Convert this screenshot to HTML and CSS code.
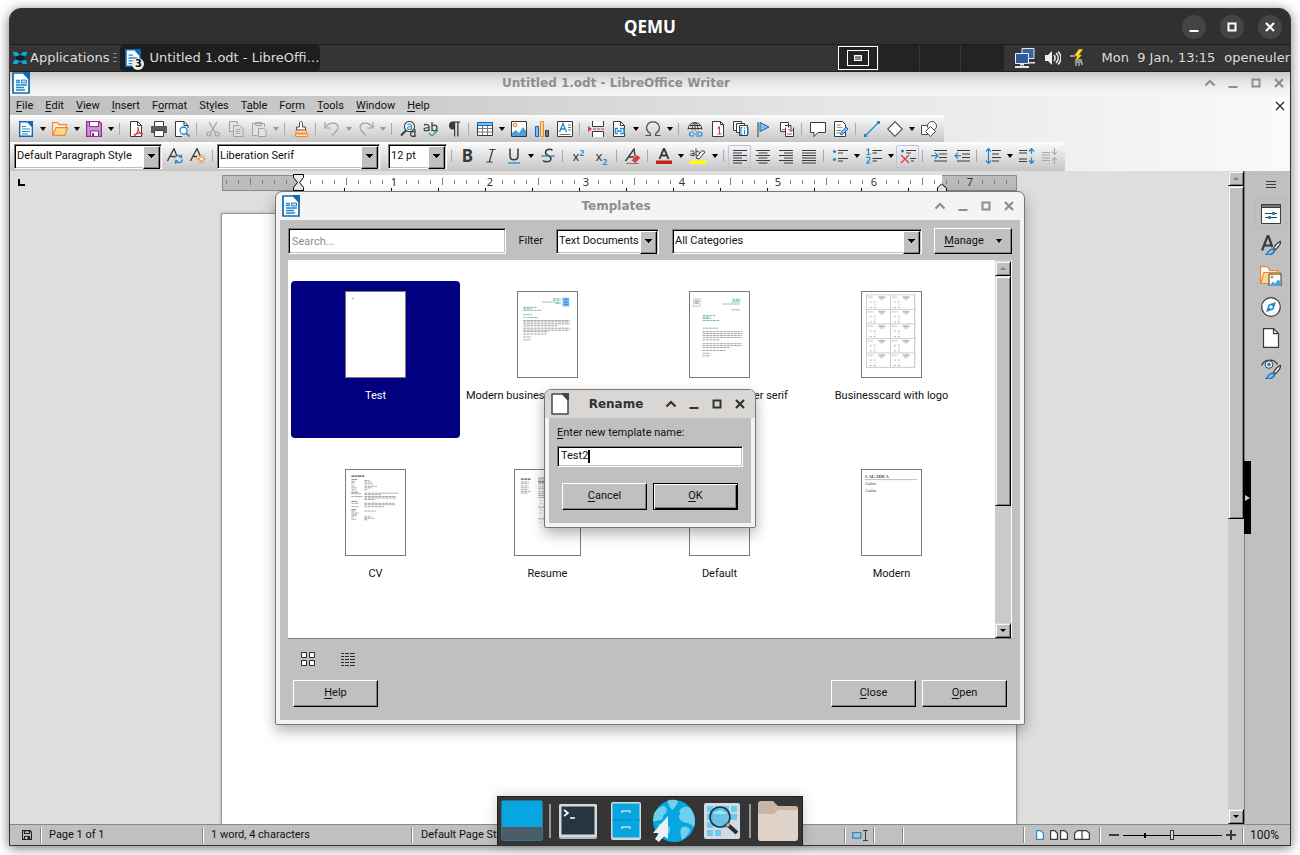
FILE: index.html
```
<!DOCTYPE html>
<html lang="en">
<head>
<meta charset="utf-8">
<title>QEMU</title>
<link rel="stylesheet" href="styles.css">
</head>
<body>
<svg class="sprite" aria-hidden="true">
  <symbol id="writer" viewBox="0 0 18 22"><path d="M1 1h10.500l5.500 6v14H1z" fill="#fdfeff" stroke="#0f69b5" stroke-width="1.700" stroke-linejoin="round"/><path d="M10.500 0H18v8z" fill="#0f69b5"/><path d="M4 8.500h4M4 10.500h4M4 13h11M4 15.500h8M4 18h9" stroke="#2487c8" stroke-width="1.300"/><path d="M9.500 8h5v3h-5z" fill="#c8dff0" stroke="#2487c8"/></symbol>
  <symbol id="blank" viewBox="0 0 18 22"><path d="M1 1h10.500l5.500 6v14H1z" fill="#fff" stroke="#464646" stroke-width="1.500" stroke-linejoin="round"/><path d="M10.500 0H18v8z" fill="#464646"/></symbol>
  <symbol id="w-up" viewBox="0 0 12 12"><path d="M1.500 8.500 6 4l4.500 4.500" fill="none" stroke="currentColor" stroke-width="2.200"/></symbol>
  <symbol id="w-min" viewBox="0 0 12 12"><path d="M1.500 10h9" stroke="currentColor" stroke-width="2"/></symbol>
  <symbol id="w-max" viewBox="0 0 12 12"><path d="M2.500 2.500h7v7h-7z" fill="none" stroke="currentColor" stroke-width="2"/></symbol>
  <symbol id="w-close" viewBox="0 0 12 12"><path d="m2 2 8 8M10 2l-8 8" fill="none" stroke="currentColor" stroke-width="2.200"/></symbol>
  <symbol id="new" viewBox="0 0 16 16"><path d="M1.700.7h8l4.600 5v9.600H1.700z" fill="#fff" stroke="#0f69b5" stroke-width="1.400"/><path d="M9.500 0H15v6z" fill="#0f69b5"/><path d="M4 5.500h4M4 8h8M4 10.500h8M4 13h6" stroke="#1e8bcd" stroke-width="1.200"/></symbol>
  <symbol id="open" viewBox="0 0 16 16"><path d="M.6 13.500V1.600h5l1.400 2h7.400v3" fill="#fdf5e6" stroke="#ed8733" stroke-width="1.200"/><path d="M.8 14.400 4 6.600h11.400l-2.600 7.800z" fill="#f8db8f" stroke="#ed8733" stroke-width="1.200"/></symbol>
  <symbol id="save" viewBox="0 0 16 16"><path d="M.6.600h12.800l2 2v12.800H.6z" fill="#c995d5" stroke="#92278f" stroke-width="1.200"/><path d="M3.500.600h9v5h-9zM4.500 10h8v5.400h-8z" fill="#fff" stroke="#92278f"/><path d="M6 12h2v3.400H6z" fill="#92278f"/></symbol>
  <symbol id="pdf" viewBox="0 0 16 16"><path d="M2.500.500h7l4 4v11h-11z" fill="#fff" stroke="#3a3a38"/><path d="M9.500.500v4h4" fill="none" stroke="#3a3a38"/><path d="M6 15c3-2 4.500-6 4-9M10 6c0 4 2 7 5 7M6 14c3-2 6-2.500 9-1" fill="none" stroke="#e33a3f" stroke-width="1.300"/></symbol>
  <symbol id="print" viewBox="0 0 16 16"><path d="M3.500 5V.500h9V5" fill="#fff" stroke="#3a3a38"/><path d="M0 5h16v7h-3V9H3v3H0z" fill="#5a5a58"/><path d="M3.500 9.500h9v6h-9z" fill="#fff" stroke="#3a3a38"/></symbol>
  <symbol id="preview" viewBox="0 0 16 16"><path d="M14 7V4.500l-4-4H1.500v15H8" fill="#fff" stroke="#3a3a38"/><path d="M10 .5v4h4" fill="none" stroke="#3a3a38"/><circle cx="9.500" cy="9.500" r="3.500" fill="#fff" stroke="#1e8bcd" stroke-width="1.300"/><path d="m12 12 3.500 3.500" stroke="#1e8bcd" stroke-width="1.600"/></symbol>
  <symbol id="cut" viewBox="0 0 16 16"><g fill="none" stroke="#a2a2a0" stroke-width="1.200"><path d="m4 1 6.500 11M12 1 5.500 12"/><circle cx="4" cy="13" r="2"/><circle cx="12" cy="13" r="2"/></g></symbol>
  <symbol id="copy" viewBox="0 0 16 16"><g fill="#e2e2e2" stroke="#a2a2a0"><path d="M5 10.500H1.500v-10h8V3"/><path d="M5.500 4.500h6l3.500 3v8H5.500zM7.500 8.500h5M7.500 10.500h5M7.500 12.500h5"/></g></symbol>
  <symbol id="paste" viewBox="0 0 16 16"><g fill="#e2e2e2" stroke="#a2a2a0"><path d="M6 14.500H1.500v-12h12V6M4.500 4.500v-3h6v3z"/><path d="M7.500 7.500h5l2.500 2v6H7.500z"/></g></symbol>
  <symbol id="brush" viewBox="0 0 16 16"><path d="M6.500 6V2c0-2 3-2 3 0v4h3v3h-9V6z" fill="#fff" stroke="#4a4a48"/><path d="M3 9.500h10.500V12H3zM2.500 13h12v2.500h-12z" fill="#fbe3b9" stroke="#ed8733"/></symbol>
  <symbol id="undo" viewBox="0 0 16 16"><path d="M1 1v6h6M1 7c4-7 13-6 13-.500 0 3-3 5-6 8" fill="none" stroke="#a2a2a0" stroke-width="1.200"/></symbol>
  <symbol id="redo" viewBox="0 0 16 16"><path d="M15 1v6H9M15 7C11 0 2 1 2 6.500c0 3 3 5 6 8" fill="none" stroke="#a2a2a0" stroke-width="1.200"/></symbol>
  <symbol id="find" viewBox="0 0 16 16"><circle cx="9.500" cy="5.500" r="5" fill="#fff" stroke="#3a3a38" stroke-width="1.100"/><path d="M6 9.500 1 14.500" stroke="#3a3a38" stroke-width="2"/><path d="M7.500 4c1-1.500 4-1.500 4 .5v4M11.500 5.500c-3 0-4 .5-4 1.700s3 2 4 0" fill="none" stroke="#1e8bcd" stroke-width="1.100"/><path d="M15 8v8M15 11.500c-1-1.500-4.500-1.500-4.500 1.500s3.500 3 4.500 1" fill="none" stroke="#3a3a38" stroke-width="1.200"/></symbol>
  <symbol id="spell" viewBox="0 0 16 16"><path d="M1 4.500c1-1.500 5-1.500 5 1V10M6 6.500c-3 0-5 .3-5 2s4 2 5 0M9 1v9M9 5.500c1-2 5-2 5 1.500s-4 3.500-5 1.500" fill="none" stroke="#3a3a38" stroke-width="1.200"/><path d="m6 12 3 3 6-6" fill="none" stroke="#18ab50" stroke-width="1.200"/></symbol>
  <symbol id="pilcrow" viewBox="0 0 16 16"><path d="M14 .600H7a4 4 0 0 0 0 8h1v7h1.200V1.700h2v13.900h1.300V1.700H14z" fill="#3a3a38"/></symbol>
  <symbol id="table" viewBox="0 0 16 16"><path d="M.5 1.500h15v13H.500z" fill="#fff" stroke="#3a3a38"/><path d="M.5 1.500h15v3H.500z" fill="#83beec" stroke="#0f69b5"/><path d="M5.500 5v9M10.500 5v9M1 7.500h14M1 11h14" stroke="#797774"/></symbol>
  <symbol id="image" viewBox="0 0 16 16"><path d="M.5.500h15v15H.500z" fill="#fff" stroke="#3a3a38"/><circle cx="4" cy="4" r="1.800" fill="#fbd9a8" stroke="#ed8733"/><path d="M1 15v-3l4-3 3 3 4-6 3 4v5z" fill="#4aa0de"/></symbol>
  <symbol id="chart" viewBox="0 0 16 16"><path d="M1.500 5.500h3v10h-3z" fill="#83beec" stroke="#0f69b5"/><path d="M6.500.500h3v15h-3z" fill="#f8db8f" stroke="#ed8733"/><path d="M11.500 9.500h3v6h-3z" fill="#797774" stroke="#3a3a38"/></symbol>
  <symbol id="textbox" viewBox="0 0 16 16"><path d="M.5.500h15v15H.500z" fill="#fff" stroke="#3a3a38"/><path d="m2.500 11 3.500-8.500L9.500 11M4 8h4" fill="none" stroke="#1e8bcd" stroke-width="1.300"/><path d="M11 4h3M11 6.500h3M11 9h3M2.500 13.500h11" stroke="#797774"/></symbol>
  <symbol id="pbreak" viewBox="0 0 16 16"><path d="M4.500 0v5.500h11V0M4.500 16v-5.500h11V16" fill="#fff" stroke="#3a3a38"/><path d="M5 8h11" stroke="#e33a3f" stroke-dasharray="3 1"/><path d="m0 5 4 3-4 3z" fill="#e33a3f"/></symbol>
  <symbol id="field" viewBox="0 0 16 16"><path d="M2.500 9V.500h7l4 4V15.500h-11V9" fill="#fff" stroke="#3a3a38"/><path d="M9.500.500v4h4" fill="none" stroke="#3a3a38"/><path d="M7 7.500H4.500v5H7M9 7.500h4v5H9M6 10h5" fill="none" stroke="#1e8bcd" stroke-width="1.500"/></symbol>
  <symbol id="omega" viewBox="0 0 16 16"><path d="M.5 14.500h4.800v-2C-1 8.500 1.500.800 8 .800s9 7.700 2.700 11.700v2h4.800" fill="none" stroke="#4a4a48" stroke-width="1.200"/></symbol>
  <symbol id="link" viewBox="0 0 16 16"><g fill="none" stroke="#3a3a38"><path d="M1 8.500a7 7 0 0 1 14 0M8 1.500v8M1 7.500h14M2.500 4.500h11M5 9c0-4 1-7 3-7.500 2 .5 3 3.500 3 7.500"/></g><path d="M7 11H4.500a2 2 0 0 0 0 4H7M9 11h4a2 2 0 0 1 0 4H9M6 13h6" fill="none" stroke="#1e8bcd" stroke-width="1.200"/></symbol>
  <symbol id="foot" viewBox="0 0 16 16"><path d="M2.500.500h8l3 3v12h-11z" fill="#fff" stroke="#3a3a38"/><path d="M10.500.500v3h3" fill="none" stroke="#3a3a38"/><path d="m7.500 7.500 2-1.500v7M7.500 13h4" fill="none" stroke="#e33a3f" stroke-width="1.200"/></symbol>
  <symbol id="endn" viewBox="0 0 16 16"><g fill="#fff" stroke="#3a3a38"><path d="M.5.500h8v9h-8z"/><path d="M3.500 2.500h8v9h-8z"/><path d="M6.500 4.500h8v10h-8z"/></g><path d="M9.500 6.500H8v7h1.500M13.500 6.500H15v7h-1.500M11.500 6.500v1.300M11.500 9v4.500" fill="none" stroke="#1e8bcd" stroke-width="1.200"/></symbol>
  <symbol id="bookmark" viewBox="0 0 16 16"><path d="M2 1v15" stroke="#3a3a38"/><path d="M4 1.500 13 6l-9 4.500z" fill="#83beec" stroke="#0f69b5"/></symbol>
  <symbol id="xref" viewBox="0 0 16 16"><g fill="#fff" stroke="#3a3a38"><path d="M1.500 1.500h8v9h-8z"/><path d="M6.500 6.500V15.500h8v-9"/></g><path d="M3 8.500h4M8 13h5" stroke="#e33a3f"/><path d="M6 4.500h6v5M9.500 8l2.500 2.500L14.500 8" fill="none" stroke="#3a3a38"/></symbol>
  <symbol id="comment" viewBox="0 0 16 16"><path d="M.5 1.500h15v10H8l-4 4v-4H.500z" fill="#fff" stroke="#3a3a38"/></symbol>
  <symbol id="track" viewBox="0 0 16 16"><path d="M1.500.500h8l3 3v12h-11z" fill="#fff" stroke="#3a3a38"/><path d="M3.500 4h4M3.500 9.500h5M3.500 12h4" stroke="#797774"/><path d="M3.500 6.500h6" stroke="#ed8733"/><path d="m7 13 6-7 2 2-6 6z" fill="#83beec" stroke="#0f69b5"/></symbol>
  <symbol id="line" viewBox="0 0 16 16"><path d="M1.500 14.500 14.500 1.500" stroke="#1e8bcd" stroke-width="1.200"/><path d="M0 13h3v3H0zM13 0h3v3h-3z" fill="#1e8bcd"/></symbol>
  <symbol id="diamond" viewBox="0 0 16 16"><path d="m8 .700 7.300 7.300L8 15.300.700 8z" fill="#fff" stroke="#4a4a48" stroke-width="1.100"/></symbol>
  <symbol id="shapes" viewBox="0 0 16 16"><g fill="#fff" stroke="#4a4a48"><path d="M.5 4.500h9v9h-9z"/><circle cx="11" cy="5" r="4.500"/><path d="m9.500 5.500 5 5-5 5-5-5z"/></g></symbol>
  <symbol id="sty-up" viewBox="0 0 16 16"><path d="M.5 13 7 .500l3 8M3.500 8.500H8" fill="none" stroke="#3a3a38" stroke-width="1.300"/><path d="M7.500 10a4 4 0 0 1 7-1V6.500M15.500 11.500a4 4 0 0 1-7 1.700V16M15 9.200h-3M8 13h3" fill="none" stroke="#1e8bcd" stroke-width="1.300"/></symbol>
  <symbol id="sty-new" viewBox="0 0 16 16"><path d="M.5 13 7 .500l3 7M3.500 8.500H7" fill="none" stroke="#3a3a38" stroke-width="1.300"/><circle cx="11.500" cy="11" r="2" fill="#fff" stroke="#ed8733"/><path d="M11.500 6v2.500M11.500 13.500V16M6.500 11H9M14 11h2.500M8 7.500l1.500 1.500M15 7.500 13.500 9M8 14.500 9.500 13M15 14.500 13.500 13" stroke="#ed8733"/></symbol>
  <symbol id="italic" viewBox="0 0 16 16"><path d="M6.500 1.500h6M3.500 14h6M9.800 1.500l-3.500 12.500" stroke="#3a3a38" stroke-width="1.200"/></symbol>
  <symbol id="under" viewBox="0 0 16 16"><path d="M4 .500v7.500c0 5 8 5 8 0V.500" fill="none" stroke="#3a3a38" stroke-width="1.500"/><path d="M2 15h12" stroke="#1e8bcd" stroke-width="1.300"/></symbol>
  <symbol id="strike" viewBox="0 0 16 16"><path d="M12.500 2.500c-2-2-7-1.500-7 2 0 4 6 2.500 5.500 6.500-.500 3.500-6 3.500-8 1.500" fill="none" stroke="#3a3a38" stroke-width="1.500"/><path d="M1 8h14" stroke="#1e8bcd" stroke-width="1.300"/></symbol>
  <symbol id="clear" viewBox="0 0 16 16"><path d="M.5 13 9 1l1 7M4 9h5" fill="none" stroke="#3a3a38" stroke-width="1.400"/><path d="m6.500 12.500 5-5.500 4 2.500-5 5.500z" fill="#e33a3f"/><path d="M1 15.500h13" stroke="#797774"/></symbol>
  <symbol id="fcolor" viewBox="0 0 16 16"><path d="M3.500 11 7.700.800h.6L12.500 11M5 7.500h6" fill="none" stroke="#3a3a38" stroke-width="1.900"/><path d="M0 12.500h16v3.500H0z" fill="#c9211e"/></symbol>
  <symbol id="hilite" viewBox="0 0 16 16"><path d="M.5 3.500c1-1 3.500-1 3.500 1V8M4 5.500c-2 0-3.500.200-3.500 1.300S3 8 4 7M6 .500V8M6 4c1-1.500 3.500-1 3.500 1.500S7 8.500 6 7" fill="none" stroke="#3a3a38"/><path d="m6 10 6-7.500 3 1.500-6 7z" fill="#fff" stroke="#3a3a38"/><path d="M0 12.500h16v3.500H0z" fill="#ff0"/></symbol>
  <symbol id="al" viewBox="0 0 16 16"><path d="M1 2.500h14M1 5h9M1 7.500h14M1 10h9M1 12.500h14M1 15h9" stroke="#3a3a38" stroke-width="1.200"/></symbol>
  <symbol id="ac" viewBox="0 0 16 16"><path d="M1 2.500h14M3.500 5h9M1 7.500h14M3.500 10h9M1 12.500h14M3.500 15h9" stroke="#3a3a38" stroke-width="1.200"/></symbol>
  <symbol id="ar" viewBox="0 0 16 16"><path d="M1 2.500h14M6 5h9M1 7.500h14M6 10h9M1 12.500h14M6 15h9" stroke="#3a3a38" stroke-width="1.200"/></symbol>
  <symbol id="aj" viewBox="0 0 16 16"><path d="M1 2.500h14M1 5h14M1 7.500h14M1 10h14M1 12.500h14M1 15h14" stroke="#3a3a38" stroke-width="1.200"/></symbol>
  <symbol id="bul" viewBox="0 0 16 16"><circle cx="2.500" cy="3.500" r="1.600" fill="#1e8bcd"/><circle cx="2.500" cy="11.500" r="1.600" fill="#1e8bcd"/><path d="M6 2.500h10M6 5h5M6 10.500h10M6 13h5" stroke="#3a3a38" stroke-width="1.200"/></symbol>
  <symbol id="num" viewBox="0 0 16 16"><path d="m.5 2 2-1v6M.5 6.500h4M.5 10c1-1.500 3.500-1 3.500.5S2 13 .5 15h4" fill="none" stroke="#1e8bcd" stroke-width="1.200"/><path d="M6.500 2.500H16M6.500 5H11M6.500 10.500H16M6.500 13H11" stroke="#3a3a38" stroke-width="1.200"/></symbol>
  <symbol id="nolist" viewBox="0 0 16 16"><circle cx="2.500" cy="3" r="1.600" fill="#1e8bcd"/><path d="M6 2.500h10M6 5h5M10 10.500h6M11 13h3" stroke="#3a3a38" stroke-width="1.200"/><path d="m1 7 8 8M9 7l-8 8" stroke="#e33a3f" stroke-width="1.300"/></symbol>
  <symbol id="ind" viewBox="0 0 16 16"><path d="M3 2.500h13M8 6h8M8 9.500h8M3 13h13" stroke="#3a3a38" stroke-width="1.200"/><path d="M0 7.700h6M4 4.700l3 3-3 3" fill="none" stroke="#1e8bcd" stroke-width="1.200"/></symbol>
  <symbol id="outd" viewBox="0 0 16 16"><path d="M3 2.500h13M8 6h8M8 9.500h8M3 13h13" stroke="#3a3a38" stroke-width="1.200"/><path d="M7 7.700H1M4 4.700l-3 3 3 3" fill="none" stroke="#1e8bcd" stroke-width="1.200"/></symbol>
  <symbol id="lsp" viewBox="0 0 16 16"><path d="M7 2.500h9M7 6h7M7 9.500h9M7 13h7" stroke="#3a3a38" stroke-width="1.200"/><path d="M3.500 1v14M1 3.500l2.500-3 2.500 3M1 12.500l2.500 3 2.500-3" fill="none" stroke="#1e8bcd" stroke-width="1.200"/></symbol>
  <symbol id="psi" viewBox="0 0 16 16"><path d="M0 2.500h8M0 5h8M0 11h8M0 13.500h8" stroke="#3a3a38" stroke-width="1.200"/><path d="M12.500 1v5M10 3.500l2.500-3 2.500 3M12.500 9.500V15M10 12.500l2.500 3 2.500-3" fill="none" stroke="#1e8bcd" stroke-width="1.200"/></symbol>
  <symbol id="psd" viewBox="0 0 16 16"><path d="M0 4.500h8M0 7h8M0 10h8M0 12.500h8M12.500 0v6M10 3.500l2.500 3 2.500-3M12.500 16v-6M10 12.500l2.500-3 2.500 3" fill="none" stroke="#a9a9a7" stroke-width="1.100"/></symbol>
  <symbol id="s-props" viewBox="0 0 20 20"><path d="M.5.500h19v19H.500z" fill="#fff" stroke="#3a3a38"/><path d="M.5.500h19v3H.500z" fill="#797774" stroke="#3a3a38"/><path d="M4 9.500h12M4 13.500h12" stroke="#3a3a38"/><path d="M11 8h3v3h-3zM7 12h3v3H7z" fill="#1e8bcd"/></symbol>
  <symbol id="s-brush" viewBox="0 0 20 20"><path d="M20.500 6c-3 1-6 4-8 7l2 1.800c2.500-2.300 5-5.300 6-8.800z" fill="#fff" stroke="#3a3a38" stroke-width="1.200"/><path d="M4.500 20c2-1 3-6 7-6l2 2c-1 4-6 4-9 4z" fill="#83beec" stroke="#0f69b5" stroke-width="1.200"/></symbol>
  <symbol id="s-styles" viewBox="0 0 20 20"><path d="M1 15.500 6.700.800h.6l4 11M3 10.500h7" fill="none" stroke="#3a3a38" stroke-width="2.200"/><use href="#s-brush" width="20" height="20"/></symbol>
  <symbol id="s-gal" viewBox="0 0 22 20"><path d="M.6 17V.600h7l2 4h8v3" fill="#fff" stroke="#ed8733" stroke-width="1.200"/><path d="m.8 17.500 3-11h17l-3 11z" fill="#f8db8f" stroke="#ed8733" stroke-width="1.200"/><path d="M9 8h12v12H9z" fill="#fff" stroke="#3a3a38"/><circle cx="12" cy="11" r="1.500" fill="#ed8733"/><path d="m9.500 19.500 3.500-4 2 2 3-4 2.500 2v4z" fill="#4aa0de"/></symbol>
  <symbol id="s-nav" viewBox="0 0 20 20"><circle cx="10" cy="10" r="9.300" fill="#fff" stroke="#3a3a38" stroke-width="1.200"/><path d="m15 5-2.500 7.500L5 15l2.500-7.500z" fill="#1e8bcd"/><circle cx="10" cy="10" r="1.700" fill="#fff"/></symbol>
  <symbol id="s-page" viewBox="0 0 20 20"><path d="M2.500.600h10l5 5v13.800h-15z" fill="#fff" stroke="#3a3a38" stroke-width="1.200"/><path d="M12.500.600v5h5" fill="none" stroke="#3a3a38" stroke-width="1.200"/></symbol>
  <symbol id="s-insp" viewBox="0 0 20 20"><path d="M.5 6.500c3-7 13-7 16-1" fill="none" stroke="#3a3a38" stroke-width="1.200"/><circle cx="8" cy="5.500" r="3.800" fill="#fff" stroke="#3a3a38"/><circle cx="8" cy="5.500" r="2" fill="#1e8bcd"/><use href="#s-brush" width="20" height="20"/></symbol>
  <symbol id="t-page" viewBox="0 0 8 10"><path d="M.6.600h4l2.800 2.600v6.200H.6z" fill="#fff" stroke="currentColor" stroke-width="1.200"/></symbol>
</svg>

<main class="window">
  <header class="qemu-bar">
    <h1>QEMU</h1>
    <div class="qemu-ctl">
      <button aria-label="Minimize"><svg><use href="#w-min"/></svg></button>
      <button aria-label="Maximize"><svg><use href="#w-max"/></svg></button>
      <button aria-label="Close"><svg><use href="#w-close"/></svg></button>
    </div>
  </header>

  <nav class="panel">
    <button class="apps"><svg width="14" height="14" viewBox="0 0 14 14"><path d="M0 1h4l3 3 3-3h4l-.5 3-3 2v2l3 2 .5 3h-4l-3-3-3 3H0l.5-3 3-2V6l-3-2z" fill="#11a7dc"/><path d="M3 5.500 7 4l4.500 1v4L7 10 3 8.500z" fill="#10222a"/></svg>Applications</button>
    <span class="grip"></span>
    <button class="task"><span class="task-icon"><svg width="18" height="18"><use href="#new"/></svg><b>3</b></span><span class="task-text">Untitled 1.odt - LibreOffi…</span></button>
    <span class="grow"></span>
    <div class="pager"><span class="cell active"><i></i></span><span class="cell"></span><span class="cell"></span><span class="cell"></span></div>
    <div class="tray">
      <svg width="22" height="20" viewBox="0 0 22 20"><path d="M8 .500h12v10H8z" fill="#3465a4" stroke="#e8e8e0"/><path d="M13 14h8v1.500h-8z" fill="#e8e8e0"/><path d="M1.500 5.500h13v10h-13z" fill="#2f5a9c" stroke="#eee"/><path d="M6 16h4v1.500H6zM1 18h14v2H1z" fill="#e8e8e0"/></svg>
      <svg width="16" height="16" viewBox="0 0 16 16"><path d="M0 5h3l4-4v14l-4-4H0z" fill="#eee"/><path d="M9 5c1.500 2 1.500 4 0 6M11 3c3 3 3 7 0 10M13 1.500c4 4 4 9 0 13" fill="none" stroke="#eee" stroke-width="1.500"/></svg>
      <svg width="16" height="18" viewBox="0 0 16 18"><path d="M0 6h5v2H0zM5 10h7v4H5z" fill="#999"/><path d="M9 0 4 7h3l-2 6 7-7H9l4-6z" fill="#fbd82c" stroke="#a07a10" stroke-width=".7"/><path d="M6 14v3M9 14v3M12 13v3" stroke="#ddd"/></svg>
    </div>
    <span class="clock">Mon&nbsp; 9 Jan, 13:15</span>
    <span class="user">openeuler</span>
  </nav>

  <section class="writer">
    <header class="titlebar inactive shade">
      <svg class="app"><use href="#writer"/></svg>
      <h2>Untitled 1.odt - LibreOffice Writer</h2>
      <div class="ctl"><button aria-label="Roll up"><svg><use href="#w-up"/></svg></button><button aria-label="Minimize"><svg><use href="#w-min"/></svg></button><button aria-label="Maximize"><svg><use href="#w-max"/></svg></button><button aria-label="Close"><svg><use href="#w-close"/></svg></button></div>
    </header>

    <div class="chrome">
      <nav class="menubar">
        <button><u>F</u>ile</button><button><u>E</u>dit</button><button><u>V</u>iew</button><button><u>I</u>nsert</button><button>F<u>o</u>rmat</button><button>St<u>y</u>les</button><button>T<u>a</u>ble</button><button>Fo<u>r</u>m</button><button><u>T</u>ools</button><button><u>W</u>indow</button><button><u>H</u>elp</button>
        <button class="doc-close" aria-label="Close document"><svg viewBox="0 0 12 12"><path d="m2 2 8 8M10 2l-8 8" stroke="#222" stroke-width="1.200"/></svg></button>
      </nav>
      <div class="toolbar standard">
        <button class="tb" aria-label="New"><svg><use href="#new"/></svg></button><button class="dd" aria-label="New options"></button>
        <button class="tb" aria-label="Open"><svg><use href="#open"/></svg></button><button class="dd" aria-label="Recent files"></button>
        <button class="tb" aria-label="Save"><svg><use href="#save"/></svg></button><button class="dd" aria-label="Save options"></button>
        <span class="sep"></span>
        <button class="tb" aria-label="Export as PDF"><svg><use href="#pdf"/></svg></button>
        <button class="tb" aria-label="Print"><svg><use href="#print"/></svg></button>
        <button class="tb" aria-label="Print preview"><svg><use href="#preview"/></svg></button>
        <span class="sep"></span>
        <button class="tb" aria-label="Cut"><svg><use href="#cut"/></svg></button>
        <button class="tb" aria-label="Copy"><svg><use href="#copy"/></svg></button>
        <button class="tb" aria-label="Paste"><svg><use href="#paste"/></svg></button><button class="dd off" aria-label="Paste options"></button>
        <span class="sep"></span>
        <button class="tb" aria-label="Clone formatting"><svg><use href="#brush"/></svg></button>
        <span class="sep"></span>
        <button class="tb" aria-label="Undo"><svg><use href="#undo"/></svg></button><button class="dd off" aria-label="Undo list"></button>
        <button class="tb" aria-label="Redo"><svg><use href="#redo"/></svg></button><button class="dd off" aria-label="Redo list"></button>
        <span class="sep"></span>
        <button class="tb" aria-label="Find and replace"><svg><use href="#find"/></svg></button>
        <button class="tb" aria-label="Spelling"><svg><use href="#spell"/></svg></button>
        <button class="tb" aria-label="Formatting marks"><svg><use href="#pilcrow"/></svg></button>
        <span class="sep"></span>
        <button class="tb" aria-label="Table"><svg><use href="#table"/></svg></button><button class="dd" aria-label="Table size"></button>
        <button class="tb" aria-label="Image"><svg><use href="#image"/></svg></button>
        <button class="tb" aria-label="Chart"><svg><use href="#chart"/></svg></button>
        <button class="tb" aria-label="Text box"><svg><use href="#textbox"/></svg></button>
        <span class="sep"></span>
        <button class="tb" aria-label="Page break"><svg><use href="#pbreak"/></svg></button>
        <button class="tb" aria-label="Field"><svg><use href="#field"/></svg></button><button class="dd" aria-label="Field types"></button>
        <button class="tb" aria-label="Special character"><svg><use href="#omega"/></svg></button><button class="dd" aria-label="Characters"></button>
        <span class="sep"></span>
        <button class="tb" aria-label="Hyperlink"><svg><use href="#link"/></svg></button>
        <button class="tb" aria-label="Footnote"><svg><use href="#foot"/></svg></button>
        <button class="tb" aria-label="Endnote"><svg><use href="#endn"/></svg></button>
        <button class="tb" aria-label="Bookmark"><svg><use href="#bookmark"/></svg></button>
        <button class="tb" aria-label="Cross-reference"><svg><use href="#xref"/></svg></button>
        <span class="sep"></span>
        <button class="tb" aria-label="Comment"><svg><use href="#comment"/></svg></button>
        <button class="tb" aria-label="Track changes"><svg><use href="#track"/></svg></button>
        <span class="sep"></span>
        <button class="tb" aria-label="Line"><svg><use href="#line"/></svg></button>
        <button class="tb" aria-label="Basic shapes"><svg><use href="#diamond"/></svg></button><button class="dd" aria-label="Shape list"></button>
        <button class="tb" aria-label="Draw functions"><svg><use href="#shapes"/></svg></button>
      </div>
      <div class="toolbar formatting">
        <span class="combo w-style"><select aria-label="Paragraph style"><option>Default Paragraph Style</option></select></span>
        <span class="style-icons"><button class="tb" aria-label="Update style"><svg><use href="#sty-up"/></svg></button><button class="tb" aria-label="New style"><svg><use href="#sty-new"/></svg></button></span>
        <span class="sep"></span>
        <span class="combo w-font"><select aria-label="Font name"><option>Liberation Serif</option></select></span>
        <span class="combo w-size"><select aria-label="Font size"><option>12 pt</option></select></span>
        <span class="sep"></span>
        <button class="tb bold">B</button>
        <button class="tb" aria-label="Italic"><svg><use href="#italic"/></svg></button>
        <button class="tb" aria-label="Underline"><svg><use href="#under"/></svg></button><button class="dd" aria-label="Underline styles"></button>
        <button class="tb" aria-label="Strikethrough"><svg><use href="#strike"/></svg></button>
        <span class="sep"></span>
        <button class="tb script" aria-label="Superscript"><span>x<sup>2</sup></span></button>
        <button class="tb script" aria-label="Subscript"><span>x<sub>2</sub></span></button>
        <span class="sep"></span>
        <button class="tb" aria-label="Clear formatting"><svg><use href="#clear"/></svg></button>
        <span class="sep"></span>
        <button class="tb" aria-label="Font color"><svg><use href="#fcolor"/></svg></button><button class="dd" aria-label="Font colors"></button>
        <button class="tb" aria-label="Highlighting"><svg><use href="#hilite"/></svg></button><button class="dd" aria-label="Highlight colors"></button>
        <span class="sep"></span>
        <button class="tb on" aria-label="Align left"><svg><use href="#al"/></svg></button>
        <button class="tb" aria-label="Center"><svg><use href="#ac"/></svg></button>
        <button class="tb" aria-label="Align right"><svg><use href="#ar"/></svg></button>
        <button class="tb" aria-label="Justify"><svg><use href="#aj"/></svg></button>
        <span class="sep"></span>
        <button class="tb" aria-label="Bullets"><svg><use href="#bul"/></svg></button><button class="dd" aria-label="Bullet styles"></button>
        <button class="tb" aria-label="Numbering"><svg><use href="#num"/></svg></button><button class="dd" aria-label="Numbering styles"></button>
        <button class="tb on" aria-label="No list"><svg><use href="#nolist"/></svg></button>
        <span class="sep"></span>
        <button class="tb" aria-label="Increase indent"><svg><use href="#ind"/></svg></button>
        <button class="tb" aria-label="Decrease indent"><svg><use href="#outd"/></svg></button>
        <span class="sep"></span>
        <button class="tb" aria-label="Line spacing"><svg><use href="#lsp"/></svg></button><button class="dd" aria-label="Line spacing values"></button>
        <button class="tb" aria-label="Increase paragraph spacing"><svg><use href="#psi"/></svg></button>
        <button class="tb" aria-label="Decrease paragraph spacing"><svg><use href="#psd"/></svg></button>
      </div>
    </div>

    <div class="workspace">
      <div class="canvas">
        <svg class="tabmark" width="8" height="8" viewBox="0 0 8 8"><path d="M1 0v6h6" fill="none" stroke="#000" stroke-width="2"/></svg>
        <svg class="ruler" width="796" height="21" viewBox="0 0 796 21">
          <defs>
            <pattern id="minor" width="12" height="16" x="77" patternUnits="userSpaceOnUse"><path d="M.5 5v4" stroke="#808080"/></pattern>
            <pattern id="half" width="96" height="16" x="77" patternUnits="userSpaceOnUse"><path d="M48.500 3v7" stroke="#808080"/></pattern>
            <pattern id="tabs" width="47" height="16" x="77" y="13" patternUnits="userSpaceOnUse"><path d="M46.500 0v3" stroke="#000"/></pattern>
          </defs>
          <path d="M1.500.500h794v15H1.500z" fill="#bcbcbc" stroke="#8a8a8a"/>
          <path d="M78 0h643v16H78z" fill="#fff"/>
          <path d="M5 0h786v15H5z" fill="url(#minor)"/>
          <path d="M5 0h786v15H5z" fill="url(#half)"/>
          <path d="M79 13h640v3H79z" fill="url(#tabs)"/>
          <g class="rnum"><text x="173" y="11">1</text><text x="269" y="11">2</text><text x="365" y="11">3</text><text x="461" y="11">4</text><text x="557" y="11">5</text><text x="653" y="11">6</text><text x="749" y="11">7</text></g>
          <path d="M72.500-.500h10v3l-4 5 4 5v3h-10v-3l4-5-4-5zM716.500 17v-4l4-4 5 4v4z" fill="#ececec" stroke="#000"/>
        </svg>
        <div class="page"></div>
      </div>
      <div class="vscroll"><button class="sb up" aria-label="Scroll up"></button><span class="thumb main-thumb"></span><button class="sb down" aria-label="Scroll down"></button></div>
      <aside class="sidebar">
        <button class="handle" aria-label="Hide sidebar"></button>
        <button class="sd" aria-label="Sidebar settings"><svg width="10" height="10" viewBox="0 0 10 10"><path d="M0 1.500h10M0 4.500h10M0 7.500h10" stroke="#3a3a38"/></svg></button>
        <button class="sd on" aria-label="Properties"><svg width="20" height="20"><use href="#s-props"/></svg></button>
        <button class="sd" aria-label="Styles"><svg width="20" height="20"><use href="#s-styles"/></svg></button>
        <button class="sd" aria-label="Gallery"><svg width="22" height="20"><use href="#s-gal"/></svg></button>
        <button class="sd" aria-label="Navigator"><svg width="20" height="20"><use href="#s-nav"/></svg></button>
        <button class="sd" aria-label="Page"><svg width="20" height="20"><use href="#s-page"/></svg></button>
        <button class="sd" aria-label="Style inspector"><svg width="20" height="20"><use href="#s-insp"/></svg></button>
      </aside>
    </div>

    <footer class="status">
      <span class="st st-save"><svg width="10" height="10" viewBox="0 0 10 10"><path d="M.6.600h7.400l1.400 1.400v7.400H.6zM2.500.600v3h5v-3M2.500 9.400v-3h5v3" fill="#eee" stroke="#222" stroke-width="1.200"/><path d="M5.500 7h2v2h-2z" fill="#222"/></svg></span>
      <span class="st st-page">Page 1 of 1</span>
      <span class="st st-words">1 word, 4 characters</span>
      <span class="st st-style">Default Page Style</span>
      <span class="st st-sel"><svg width="17" height="11" viewBox="0 0 17 11"><path d="M.7 2.700h8v5.500h-8z" fill="none" stroke="#1e8bcd" stroke-width="1.300"/><path d="M11 .500h5M11 10.500h5M13.500.500v10" stroke="#3a3a38"/></svg></span>
      <span class="st st-sig"></span>
      <span class="st st-blank"></span>
      <span class="st st-views"><svg class="blue" width="8" height="10"><use href="#t-page"/></svg><svg width="18" height="10" viewBox="0 0 18 10"><use href="#t-page" width="8" height="10"/><use href="#t-page" x="10" width="8" height="10"/></svg><svg width="16" height="10" viewBox="0 0 16 10"><path d="M8 9.400V.600H3.500L.600 3.200v6.200zM8 9.400V.600h4.500l2.900 2.600v6.200z" fill="#fff" stroke="#3a3a38" stroke-width="1.200"/></svg></span>
      <span class="st st-zoom"><button aria-label="Zoom out"><svg width="10" height="10"><path d="M0 5h10" stroke="#3a3a38" stroke-width="2"/></svg></button><input type="range" aria-label="Zoom" min="0" max="100" value="49"><button aria-label="Zoom in"><svg width="10" height="10"><path d="M0 5h10M5 0v10" stroke="#3a3a38" stroke-width="2"/></svg></button></span>
      <span class="st st-pct">100%</span>
    </footer>
  </section>

  <section class="dialog templates" role="dialog" aria-labelledby="t-title">
    <header class="titlebar inactive">
      <svg class="app"><use href="#writer"/></svg>
      <h2 id="t-title">Templates</h2>
      <div class="ctl"><button aria-label="Roll up"><svg><use href="#w-up"/></svg></button><button aria-label="Minimize"><svg><use href="#w-min"/></svg></button><button aria-label="Maximize"><svg><use href="#w-max"/></svg></button><button aria-label="Close"><svg><use href="#w-close"/></svg></button></div>
    </header>
    <div class="t-body">
      <div class="t-filter">
        <input class="field search" type="text" placeholder="Search..." aria-label="Search">
        <label for="filter">Filter</label>
        <span class="combo w-app"><select id="filter"><option>Text Documents</option></select></span>
        <span class="combo w-cat"><select aria-label="Category"><option>All Categories</option></select></span>
        <button class="btn manage"><span><u>M</u>anage</span></button>
      </div>
      <div class="t-list">
        <ul class="t-grid">
          <li class="sel"><svg class="th" viewBox="0 0 61 87"><path d="M6 6.500h2" stroke="#b88"/></svg><span>Test</span></li>
          <li><svg class="th" viewBox="0 0 61 87"><path d="M46 5.500h7v9h-7z" fill="#6db9f7"/><path d="M48 7h3M48 10h3M48 12.500h3" stroke="#3f7fb5"/><g class="teal"><path d="M36 6.500h8M36 8h8M25 10h19M39 11.500h5M5.500 15.500h14M5.500 17h9M5.500 18.500h19M9 26h12M5.500 49h8"/></g><g class="ink"><path d="M5.500 23h9M5.500 26h2M5.500 43h24M5.500 46h8"/><path d="M5.500 29h48M5.500 30.500h48M5.500 32.500h48M5.500 34.500h36M5.500 37h48M5.500 39h48M5.500 40.500h26"/></g></svg><span>Modern business letter sans-serif</span></li>
          <li><svg class="th" viewBox="0 0 61 87"><path d="M3.500 6.500h7v8h-7z" fill="#f3f3f3" stroke="#ccc"/><path d="M5 9h4M5 11h4" stroke="#59a"/><g class="teal"><path d="M44 7h8M44 8.500h8M43 10h9M34 12h18M13 24h13M13 25.500h8M13 27h9M13 29h18M16 37h13M13 65.500h8"/></g><g class="ink"><path d="M43 18h9M13 37h2M13 60h24M13 63h8"/><path d="M13 40.500h41M13 42.500h41M13 44.500h41M13 46.500h41M13 49h18M13 53h41M13 55h41M13 57h28"/></g></svg><span>Modern business letter serif</span></li>
          <li><svg class="th" viewBox="0 0 61 87"><defs><pattern id="card" x="4" y="2" width="25" height="15" patternUnits="userSpaceOnUse"><path d="M.5 0v15M0 .500h25" stroke="#ccc"/><path d="M1.500 3h6" stroke="#aca"/><path d="M13 3h7" stroke="#777"/><path d="M15 5h3M4 8h2M8 8h2M9 11h1M4 13.500h2M8 13.500h2" stroke="#aaa"/></pattern></defs><path d="M4 2h51v75.500H4z" fill="url(#card)"/><path d="M4.500 77.500h50V2" fill="none" stroke="#ccc"/></svg><span>Businesscard with logo</span></li>
          <li><svg class="th" viewBox="0 0 61 87"><path d="M5.500 6h14" stroke="#555" stroke-width="1.300" stroke-dasharray="3 .5"/><g class="navy"><path d="M5.500 9.500h6M5.500 22.500h7M5.500 32h6M5.500 40.500h5M5.500 46h6"/></g><g class="ink"><path d="M5.500 11.500h4M5.500 13h4M5.500 16h4M5.500 18h6M5.500 20h5M19 10.500h5M19 12h8M19 14h9M19 16.500h13M19 18h8M19 20h4M19 23.500h35M5.500 24h10M19 25h17M5.500 27h12M19 27h33M19 28.500h33M19 30h11M5.500 34h8M19 34h31M19 35.500h32M5.500 37.500h8M19 37.500h20M5.500 42h4M19 42h12M5.500 44h8M5.500 48h4M19 48h7M5.500 50.500h5M19 49.500h11M19 51h3"/></g></svg><span>CV</span></li>
          <li><svg class="th wide" viewBox="0 0 67 87"><path d="M6 9h10M24 12h32" stroke="#555" stroke-width="1.300" stroke-dasharray="3 .5"/><g class="navy"><path d="M24 8h14"/></g><g class="ink"><path d="M6 12h8M6 13.500h8M6 16h8M6 18h8M6 20h8M6 22h10M6 23.500h7M24 10h32M24 14h30M24 17h12M24 19h32M24 22h32M24 24h32M24 26h20M24 28h30M26 31h1M26 34h1M24 38h18M26 41h1M26 44h1M24 50h16M26 54h1"/></g></svg><span>Resume</span></li>
          <li><svg class="th" viewBox="0 0 61 87"></svg><span>Default</span></li>
          <li><svg class="th" viewBox="0 0 61 87"><text x="3" y="8" class="cal">CALADEA</text><path d="M3 9.500h54" stroke="#bbb"/><text x="3" y="15" class="cal s">Carlito</text><text x="3" y="22" class="cal s">Carlito</text></svg><span>Modern</span></li>
        </ul>
        <div class="vscroll"><button class="sb up" aria-label="Scroll up"></button><span class="thumb t-thumb"></span><button class="sb down" aria-label="Scroll down"></button></div>
      </div>
      <div class="t-views">
        <button aria-label="Thumbnail view"><svg width="14" height="14" viewBox="0 0 14 14"><path d="M.5.500h5v5h-5zM8.500.500h5v5h-5zM.5 8.500h5v5h-5zM8.500 8.500h5v5h-5z" fill="#fff" stroke="#2a2a28"/></svg></button>
        <button aria-label="List view"><svg width="14" height="14" viewBox="0 0 14 14"><path d="M0 1.500h14M0 4.500h14M0 7.500h14M0 10.500h14M0 13.500h14" stroke="#2a2a28" stroke-dasharray="3 1 4 1 5 0"/></svg></button>
      </div>
      <div class="t-actions"><button class="btn"><span><u>H</u>elp</span></button><span class="grow"></span><button class="btn"><span><u>C</u>lose</span></button><button class="btn"><span><u>O</u>pen</span></button></div>
    </div>
  </section>

  <section class="dialog rename" role="dialog" aria-labelledby="r-title">
    <header class="titlebar">
      <svg class="app"><use href="#blank"/></svg>
      <h2 id="r-title">Rename</h2>
      <div class="ctl"><button aria-label="Roll up"><svg><use href="#w-up"/></svg></button><button aria-label="Minimize"><svg><use href="#w-min"/></svg></button><button aria-label="Maximize"><svg><use href="#w-max"/></svg></button><button aria-label="Close"><svg><use href="#w-close"/></svg></button></div>
    </header>
    <div class="r-body">
      <label for="tname"><u>E</u>nter new template name:</label>
      <div class="field name"><input id="tname" type="text" value="Test2"><i class="caret"></i></div>
      <div class="r-actions"><button class="btn"><span><u>C</u>ancel</span></button><button class="btn default"><span><u>O</u>K</span></button></div>
    </div>
  </section>

  <nav class="dock">
    <button aria-label="Show desktop"><svg width="42" height="42" viewBox="0 0 42 42"><rect x=".5" y=".5" width="41" height="40" rx="2" fill="#4b5d68" stroke="#33718c"/><path d="M1 1h40v26H1z" fill="#06a7e0"/></svg></button>
    <span class="bar"></span>
    <button aria-label="Terminal"><svg width="40" height="36" viewBox="0 0 40 36"><rect x="1" y="1" width="38" height="35" rx="2" fill="#b4b8bc"/><rect x="1" y="1" width="38" height="33" rx="2" fill="#d6dadf"/><rect x="3.500" y="3.500" width="33" height="28" fill="#263640"/><path d="m6 7 4 3-4 3" fill="none" stroke="#fff" stroke-width="1.600"/><path d="M12 15h5" stroke="#fff" stroke-width="1.500"/></svg></button>
    <button aria-label="File manager"><svg width="32" height="40" viewBox="0 0 32 40"><rect x="1" y="1" width="30" height="38" rx="2" fill="#d6dadf"/><path d="M2.500 2.500h27v34h-27z" fill="#06a7e0"/><path d="M2 19h28" stroke="#0686b5"/><path d="M12 12v-2h8v2M12 28v-2h8v2" fill="none" stroke="#cfd5da" stroke-width="1.500"/></svg></button>
    <button aria-label="Web browser"><svg width="44" height="44" viewBox="0 0 44 44"><circle cx="22" cy="22" r="21" fill="#06a7e0"/><path d="M15 2c4-2 8-1 11 0-1 4-4 8-6 9-3-3-3-6-5-9zM2 15c2-4 6-8 10-8 3 2 4 5 1 8-3 1-1 5-4 6-4 0-5 2-8 1zM27 12c4-5 7-5 11-3 5 6 6 13 4 19-2-1-3-3-6-4-5 0-9-3-9-7 1-2 2-3 0-5zM30 28c5-1 8 1 8 4-2 4-5 7-8 9-1-4-3-9 0-13zM7 25c5-2 8 0 11 4 0 5-2 8-7 9-4-4-6-8-4-13z" fill="#6fd0ee"/><path d="M16 17v23l-4-3-5 6-4-3 4-6H1z" fill="#eef1f3"/></svg></button>
    <button aria-label="Application finder"><svg width="38" height="38" viewBox="0 0 38 38"><rect x="1" y="1" width="36" height="36" rx="2" fill="#d6dadf"/><path d="M4 4h6v6H4zM12 4h6v6h-6zM20 4h6v6h-6zM28 4h6v6h-6zM4 12h6v6H4zM28 12h6v6h-6zM4 20h6v6H4zM4 28h6v6H4zM12 28h6v6h-6zM20 20h6v6h-6z" fill="#64cdf2"/><circle cx="17" cy="15" r="10" fill="#3db8e6" fill-opacity=".7" stroke="#1f3440" stroke-width="1.600"/><path d="M10 12a8 7 0 0 1 14 0z" fill="#9fe0f6"/><path d="m25 23 9 8" stroke="#1f3440" stroke-width="4"/><path d="m24 22 2 2" stroke="#f0b429" stroke-width="3"/></svg></button>
    <span class="bar"></span>
    <button aria-label="Folder"><svg width="42" height="42" viewBox="0 0 42 42"><path d="M1 39V4c0-2 1-3 3-3h12l5 5h18c1 0 2 1 2 2v31z" fill="#c9b5a6"/><path d="M1 14h16l4-4h20v28c0 2-1 3-3 3H3c-1 0-2-1-2-3z" fill="#dfd3c9"/></svg></button>
  </nav>
</main>
</body>
</html>
```
FILE: styles.css
```
* { box-sizing: border-box; }

body {
  margin: 0;
  padding: 8px 9px 9px;
  background: #fff;
  font: 11px/16px Roboto, "Noto Sans", sans-serif;
  color: #111;
  overflow: hidden;
}

button, input, select { font: inherit; color: inherit; margin: 0; padding: 0; border: 0; background: none; }
h1, h2, ul { margin: 0; padding: 0; }
ul { list-style: none; }
u { text-underline-offset: 2px; }
svg { display: block; flex: none; }
symbol { overflow: visible; }
.sprite { display: none; }
.grow { flex: 1; }

.window {
  position: relative;
  display: flex;
  flex-direction: column;
  min-height: calc(100vh - 17px);
  border: 1px solid #353535;
  border-radius: 12px 12px 0 0;
  background: #303030;
  box-shadow: 0 2px 12px rgba(0, 0, 0, .55);
}

/* Host window title */
.qemu-bar {
  display: flex;
  align-items: center;
  justify-content: center;
  position: relative;
  height: 36px;
  border-bottom: 1px solid #1e1e1e;
  color: #fff;
}
.qemu-bar h1 { font: bold 17px/24px "Noto Sans", sans-serif; }
.qemu-ctl { position: absolute; right: 8px; display: flex; gap: 14px; }
.qemu-ctl button { display: grid; place-items: center; width: 24px; height: 24px; border-radius: 12px; background: #454545; }
.qemu-ctl svg { width: 12px; height: 12px; }

/* Guest desktop panel */
.panel {
  display: flex;
  align-items: center;
  height: 27px;
  background: #353535;
  border-bottom: 1px solid #202020;
  font: 13px/16px "DejaVu Sans", sans-serif;
  color: #ddd;
}
.apps { display: flex; align-items: center; gap: 3px; padding-left: 3px; }
.grip { width: 4px; height: 10px; margin: 0 3px 0 4px; background: repeating-linear-gradient(#888 0 1px, transparent 1px 4px); }
.task { display: flex; align-items: center; gap: 5px; width: 200px; height: 26px; padding: 0 0 0 4px; border-radius: 4px; background: #1e1e1e; }
.task-icon { position: relative; width: 20px; flex: none; }
.task-icon b { position: absolute; right: 0; bottom: -3px; width: 12px; height: 12px; border-radius: 6px; background: #eee; color: #111; font: bold 10px/12px "DejaVu Sans", sans-serif; text-align: center; }
.task-text { white-space: nowrap; }
.pager { display: flex; gap: 1px; height: 26px; background: #353535; }
.cell { width: 40px; background: #232323; display: grid; place-items: center; }
.cell:last-child { width: 43px; }
.cell.active { border: 1px solid #fff; margin: 1px 0; }
.cell i { width: 22px; height: 16px; border: 1px solid #fff; display: grid; place-items: center; }
.cell i::before { content: ""; width: 6px; height: 4px; border: 1px solid #fff; background: #888; }
.tray { display: flex; align-items: center; gap: 9px; padding: 0 16px 0 10px; }
.user { margin-left: 9px; }

/* Guest window title bars */
.titlebar {
  display: flex;
  align-items: center;
  height: 28px;
  padding-left: 6px;
  color: #2e3436;
}
.titlebar.inactive { color: #8b8e8f; }
.titlebar .app { width: 18px; height: 22px; }
.titlebar h2 { flex: 1; padding-left: 4px; text-align: center; font: bold 12px/16px "DejaVu Sans", sans-serif; }
.ctl { display: flex; padding-right: 4px; }
.ctl button { display: grid; place-items: center; width: 23px; height: 20px; }
.ctl svg { width: 12px; height: 12px; }
.shade { height: 24px; padding: 0 0 2px 2px; background: linear-gradient(#c8c8c5, #e6e5e3 40%, #f6f5f3 85%); }
.shade .ctl { padding-right: 0; }

.writer { flex: 1; display: flex; flex-direction: column; }
.chrome { background: linear-gradient(90deg, #c0c0c0, #c8c8c8 25%, #e6e6e6 65%, #fafafa); }
.menubar { display: flex; gap: 12px; height: 19px; padding: 0 3px 0 6px; align-items: center; }
.doc-close { margin-left: auto; width: 14px; height: 14px; background: #fff; display: grid; place-items: center; }
.doc-close svg { width: 12px; height: 12px; }
.toolbar { display: flex; align-items: center; width: max-content; background: linear-gradient(#fdfdfd, #e0e0e0 50%, #c6c6c6); }
.standard { height: 27px; padding: 0 4px; }
.formatting { height: 29px; padding: 0 4px 1px; }
.tb { display: grid; place-items: center; width: 23px; height: 23px; border: 1px solid transparent; border-radius: 2px; flex: none; }
.tb svg { width: 16px; height: 16px; }
.bold { font: bold 17px/20px "Noto Sans", sans-serif; color: #3a3a38; }
.script { font: 13px/16px "Noto Sans", sans-serif; color: #3a3a38; }
.script sup, .script sub { font-size: 9px; font-weight: 600; line-height: 0; color: #1e8bcd; }
.on { border-color: #c0c0e2; }
.dd { display: grid; place-items: center; width: 11px; height: 23px; flex: none; }
.dd::before, .btn.manage::after {
  content: "";
  border: 3px solid transparent;
  border-top: 4px solid #000;
  border-bottom: 0;
}
.dd.off::before { border-top-color: #999; }
.sep { width: 8px; height: 12px; flex: none; background: linear-gradient(90deg, transparent 3px, #a8a8a8 3px 4px, transparent 4px); }

/* Bevelled controls */
.combo, .field {
  background: #fff;
  border: 1px solid;
  border-color: #808080 #fff #fff #808080;
  box-shadow: inset 1px 1px #000, inset -1px -1px #c0c0c0;
}
.combo { position: relative; display: flex; height: 25px; padding: 2px 17px 2px 2px; flex: none; }
.combo select { flex: 1; min-width: 0; appearance: none; outline: 0; }
.combo::after {
  content: "";
  position: absolute;
  right: 1px;
  top: 1px;
  width: 15px;
  height: 21px;
  border: 1px solid;
  border-color: #fff #000 #000 #fff;
  box-shadow: inset -1px -1px #808080;
  background: conic-gradient(from -45deg at 50% 100%, #000 90deg, transparent 0) 50% 45% / 7px 4px no-repeat #c0c0c0;
  pointer-events: none;
}
.w-style { width: 148px; }
.style-icons { display: flex; padding: 0 0 0 1px; }
.w-font { width: 163px; }
.w-size { width: 59px; margin: 0 1px 0 8px; }
.w-app { width: 103px; }
.w-cat { width: 250px; }

.btn {
  display: flex;
  align-items: center;
  justify-content: center;
  width: 85px;
  height: 27px;
  padding-bottom: 1px;
  background: #c0c0c0;
  border: 1px solid;
  border-color: #fff #000 #000 #fff;
  box-shadow: inset -1px -1px #808080;
}
.btn.default { border-color: #000; box-shadow: inset 1px 1px #fff, inset -1px -1px #000, inset -2px -2px #808080; }

/* Document area */
.workspace { flex: 1; display: flex; background: #dededc; }
.canvas { position: relative; flex: 1; display: flex; flex-direction: column; align-items: center; overflow: hidden; padding-top: 4px; }
.tabmark { position: absolute; left: 8px; top: 8px; }
.ruler { overflow: visible; }
.rnum text { font: 11px "Noto Sans", sans-serif; text-anchor: middle; fill: #333; stroke: #fff; stroke-width: 3px; paint-order: stroke; }
.rnum text:last-child { stroke: #bcbcbc; }
.page { flex: 1; width: 796px; margin-top: 17px; background: #fff; border: 1px solid #999; border-bottom: 0; box-shadow: 0 0 3px rgba(0, 0, 0, .25); }
.vscroll { display: flex; flex-direction: column; width: 16px; background: #cacaca; flex: none; }
.sb, .thumb { display: block; width: 16px; background: #c0c0c0; border: 1px solid; border-color: #d8d8d8 #000 #000 #d8d8d8; box-shadow: inset 1px 1px #fff, inset -1px -1px #808080; }
.sb { height: 15px; display: grid; place-items: center; flex: none; }
.sb::before { content: ""; border: 3px solid transparent; border-top: 3px solid #000; border-bottom: 0; }
.sb.up::before { border-top: 0; border-bottom: 3px solid #808080; }
.sb.down { margin-top: auto; }
.main-thumb { flex: 0 0 51%; }
.t-thumb { flex: 0 0 61%; }
.sidebar { position: relative; width: 46px; padding: 3px 4px 0 10px; background: #c0c0c0; border-left: 1px solid #808080; }
.sd { display: grid; place-items: center; width: 31px; height: 31px; border: 1px solid transparent; border-radius: 2px; }
.sd.on { border-color: #b4b4d8; }
.sd:nth-child(2) { height: 22px; margin-bottom: 2px; }
.handle { position: absolute; left: -1px; top: 290px; width: 7px; height: 73px; background: #000; display: grid; place-items: center; }
.handle::before { content: ""; border: 3px solid transparent; border-left: 5px solid #ccc; border-right: 0; }

/* Status bar */
.status { display: flex; align-items: center; height: 21px; background: #c0c0c0; border-top: 1px solid #888; }
.st { display: flex; align-items: center; height: 16px; padding-left: 8px; border-right: 1px solid #fff; box-shadow: inset -1px 0 #888; white-space: nowrap; flex: none; }
.st-save { width: 32px; padding-left: 12px; }
.st-page { width: 162px; padding-left: 7px; }
.st-words { width: 209px; padding-left: 7px; }
.st-style { flex: 1; }
.st-sel { width: 29px; padding-left: 6px; }
.st-sig { width: 29px; }
.st-blank { width: 121px; }
.st-views { width: 76px; padding-left: 11px; gap: 6px; color: #3a3a38; }
.blue { color: #1e8bcd; }
.st-zoom { width: 143px; gap: 4px; }
.st-zoom button { display: grid; flex: none; }
.st-pct { width: 46px; padding-left: 6px; border: 0; box-shadow: none; font: 12px/16px Roboto, sans-serif; }
.st-zoom input { appearance: none; width: 99px; height: 12px; background: linear-gradient(#000, #000) 21px 50% / 2px 5px no-repeat, linear-gradient(#000, #000) 0 50% / 100% 1px no-repeat; }
.st-zoom input::-webkit-slider-thumb { appearance: none; width: 4px; height: 10px; background: #ddd; border: 1px solid #333; }

/* Dialogs */
.dialog {
  position: absolute;
  display: flex;
  flex-direction: column;
  background: #f5f4f2;
  border: 1px solid #777;
  border-radius: 7px 7px 2px 2px;
  box-shadow: 0 6px 14px rgba(0, 0, 0, .3);
}
.dialog .titlebar { border-radius: 6px 6px 0 0; }
.templates { left: 265px; top: 182px; width: 750px; }
.t-body { margin: 0 4px 4px; padding: 8px 8px 13px; background: #c0c0c0; }
.t-filter { display: flex; align-items: center; margin-bottom: 6px; }
.search { flex: 1; height: 26px; padding: 0 3px; outline: 0; }
.search::placeholder { color: #8c8c8c; }
.t-filter label { margin: 0 13px 0 12px; }
.w-app { margin-right: 13px; }
.manage { width: 78px; height: 26px; margin-left: 12px; gap: 12px; }
.t-list { display: flex; height: 379px; background: #fff; border-bottom: 1px solid #808080; padding-right: 1px; }
.t-grid { flex: 1; display: grid; grid-template-columns: repeat(4, 169px); gap: 21px 3px; align-content: start; padding: 21px 3px 0; }
.t-grid li { display: flex; flex-direction: column; align-items: center; gap: 10px; height: 157px; padding-top: 10px; border-radius: 4px; white-space: nowrap; }
.t-grid .sel { background: #000080; color: #fff; }
.th { width: 61px; height: 87px; background: #fff; border: 1px solid #7a7a7a; }
.th.wide { width: 67px; }
.teal { stroke: #79b8b8; stroke-dasharray: 3 .6; }
.ink { stroke: #a4a4a4; stroke-dasharray: 3 .6; }
.navy { stroke: #6f8fc0; }
.cal { font: bold 5px "Liberation Serif", serif; fill: #444; }
.cal.s { font: 4px "Liberation Sans", sans-serif; }
.t-list .vscroll { padding-top: 1px; }
.t-views { display: flex; gap: 26px; padding: 13px 13px 14px; }
.t-actions { display: flex; gap: 6px; padding: 0 5px; }

.rename { left: 534px; top: 380px; width: 212px; }
.rename .titlebar { background: #dad6d3; }
.r-body { margin: 0 4px 4px; padding: 7px 8px 13px; background: #c0c0c0; }
.r-body label { display: block; }
.name { display: flex; align-items: center; height: 21px; margin: 5px 0 16px; padding: 0 3px 1px; }
.name input { width: 27px; outline: 0; }
.caret { width: 2px; height: 13px; background: #000; }
.r-actions { display: flex; justify-content: center; gap: 6px; }

/* Launcher */
.dock {
  position: absolute;
  left: 50%;
  bottom: 0;
  transform: translateX(-50%);
  display: flex;
  align-items: center;
  height: 49px;
  background: #353535;
  border: 1px solid #202020;
  border-bottom: 0;
  box-shadow: 0 0 12px rgba(0, 0, 0, .2);
}
.dock button { display: grid; place-items: center; width: 48px; }
.dock .bar { width: 2px; height: 34px; margin: 0 3px; background: #999; }
```
